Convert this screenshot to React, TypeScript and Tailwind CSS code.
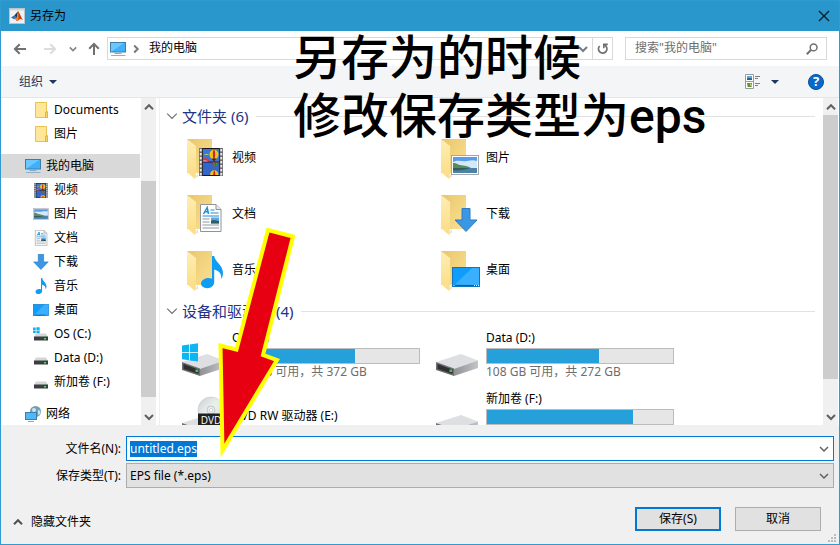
import { useEffect, useRef } from "react";
import type { ReactNode } from "react";

const UI_FONT = "font-['Noto_Sans','Noto_Sans_CJK_SC',sans-serif]";

/* ---------- small glyphs ---------- */

type Dir = "up" | "down" | "right";

function Chevron({ dir, size = 10, width = 1.5, color = "#606060" }: { dir: Dir; size?: number; width?: number; color?: string }) {
  const d = { up: "M1 7.2 5 3.2 9 7.2", down: "M1 3 5 7 9 3", right: "M3.2 1.5 6.7 5 3.2 8.5" }[dir];
  return (
    <svg width={size} height={size} viewBox="0 0 10 10" fill="none" stroke={color} strokeWidth={width} className="shrink-0" aria-hidden="true">
      <path d={d} />
    </svg>
  );
}

function Caret() {
  return (
    <svg width="8" height="4" viewBox="0 0 8 4" fill="#1e395b" aria-hidden="true">
      <path d="M0 0h8L4 4z" />
    </svg>
  );
}

function ArrowGlyph({ rotate = 0, color }: { rotate?: number; color: string }) {
  return (
    <svg width="14" height="14" viewBox="0 0 14 14" fill="none" stroke={color} strokeWidth="2" aria-hidden="true">
      <g transform={`rotate(${rotate} 7 7)`}>
        <path d="M13 7H2M6.7 2.2 1.9 7l4.8 4.8" />
      </g>
    </svg>
  );
}

function MatlabIcon() {
  return (
    <svg width="16" height="16" viewBox="0 0 16 16" aria-hidden="true">
      <rect x=".5" y=".5" width="15" height="15" fill="#f1f1f1" stroke="#b9c4cc" />
      <path d="M1 1h14v1.500H1z" fill="#cfd6dc" />
      <path d="M2 9.500 5.500 7.200 7.200 9 5 11.200z" fill="#2f6fb5" />
      <path d="M5.500 7.200 9 3.200 8 9.500 5 11.600 7 9z" fill="#16365f" />
      <path d="M9.200 3C10.800 5.200 12 9 14 12.200 12 11 11 10.600 9.800 12 8.800 13 7.800 13.300 6.500 11.500 8 10 8.600 6 9.200 3z" fill="#b9421a" />
      <path d="M9.200 3c.4 3 .3 6 .2 9.200-.9.900-1.900.6-2.900-.7C8 10 8.600 6 9.200 3z" fill="#f0862c" />
    </svg>
  );
}

function ComputerIcon() {
  return (
    <svg width="16" height="16" viewBox="0 0 16 16" className="shrink-0" aria-hidden="true">
      <rect x=".5" y="1.500" width="15" height="9.500" fill="#3fb0fb" stroke="#3b7ea8" />
      <path d="M1 11V2h13z" fill="#6cc7ff" />
      <path d="M4.500 12.500h7" stroke="#8fa9bb" />
      <path d="M1 14.500h14.500" stroke="#8fb0c6" />
    </svg>
  );
}

function SmallFolder() {
  return (
    <svg width="16" height="16" viewBox="0 0 16 16" className="shrink-0" aria-hidden="true">
      <path d="M2.500.5h11v9h1v6h-12z" fill="#ffe699" stroke="#e8c250" />
      <path d="M12.500 15.500v-5.500h2v5.500z" fill="#fbd768" stroke="#e0b63c" />
    </svg>
  );
}

/* ---------- shared artwork, drawn in a 24 x 28 box ---------- */

function FilmArt() {
  return (
    <>
      <rect width="24" height="28" fill="#6b6b6b" />
      <g fill="#e6e6e6">
        {[1, 5, 9, 13, 17, 21, 25].map((y) => (
          <g key={y}>
            <rect x=".8" y={y} width="1.900" height="2.400" />
            <rect x="21.300" y={y} width="1.900" height="2.400" />
          </g>
        ))}
      </g>
      <rect x="3.300" width="17.400" height="28" fill="#15181f" />
      <rect x="4" y="1" width="16" height="12.500" fill="#3d76d8" />
      <rect x="4" y="14.500" width="16" height="12.500" fill="#3465cb" />
      <path d="M4 11c2-1.500 4-1 6 .5l1 2H4z" fill="#d8383a" />
      <path d="M4 12.500c2-.8 4-.2 5 1H4z" fill="#e88bb4" />
      <path d="M5 7c2-1.600 4-1 5 0z" fill="#c2d65a" />
      <ellipse cx="15" cy="6.500" rx="4.500" ry="4.800" fill="#f2c414" />
      <ellipse cx="15" cy="6.500" rx="1.100" ry="4.800" fill="#c7281d" />
      <path d="m12.500 10.500 2.500 3 2.500-3z" fill="#3a2c10" />
      <path d="M12.500 14.500h7.500l-3 4h-2z" fill="#c7281d" />
      <path d="M14 14.500h1.500l.5 4h-.8zM17.500 14.500H19l-2 4h-.5z" fill="#35a04a" />
      <path d="M11 27c0-6.500 8.500-6.500 8.500 0z" fill="#f2c414" />
      <path d="M14.300 27c0-6 2-6 2 0z" fill="#c7281d" />
    </>
  );
}

function PictureArt() {
  return (
    <>
      <rect x=".5" y=".5" width="27" height="19" fill="#fff" stroke="#a3a7aa" />
      <rect x="2" y="2" width="24" height="16" fill="#5b9cea" />
      <path d="M2 7c5-3 9 0 14-1 4-1 7-1 10 0v7H2z" fill="#d4e9fa" />
      <path d="M2 8c3-.5 4 1 7 2 4 .8 8 1 11 3H2z" fill="#5c8a5c" />
      <path d="M2 13h24v5H2z" fill="#4b83a8" />
      <path d="M2 13h17c-5 2-10 2.500-17 2.500z" fill="#33605f" />
    </>
  );
}

function DocumentArt() {
  return (
    <>
      <path d="M.5.5h15.500l5 5V27.500H.5z" fill="#fdfdfd" stroke="#8f9498" />
      <path d="M16 .5v5h5" fill="#e6e8ea" stroke="#8f9498" />
      <path d="m3.500 10 3.700-6.500L8.500 10M4.800 7.800h3.500" fill="none" stroke="#1f8fd8" strokeWidth="1.500" />
      <path d="M10.500 6h4M10.500 9h8M2.500 12h16.500" stroke="#1f8fd8" strokeWidth="1.200" />
      <path d="M2.500 15h7M2.500 18h7M2.500 21h16.500M2.500 24h16.500" stroke="#8b9aa5" />
      <rect x="11" y="13.500" width="8" height="6" fill="#5ea6dd" />
      <path d="M11 17c3-2 5 0 8 0v2.500h-8z" fill="#2e5c66" />
    </>
  );
}

function DownArt() {
  return <path d="M8 .5h8v11.500h7L12 23.500 1 12h7z" fill="#3b97e3" stroke="#2a7cc4" />;
}

function MusicArt() {
  return (
    <path
      d="M11 0h2.200C14 6 22 9 22 17c0 2.500-.8 4.500-2 6 1-5.500-2.500-8.500-6.800-9.500V26c0 3.500-3 6.200-7 6.200C2.500 32.200 0 30.300 0 27.600 0 24.500 3.500 22 7.500 22c1.400 0 2.600.3 3.500.8z"
      fill="#0e9cf5"
    />
  );
}

function DesktopArt() {
  return (
    <>
      <rect x=".5" y=".5" width="27" height="19" fill="#0f9dfd" stroke="#1673b5" />
      <path d="M3 17.500 20 1h7v17z" fill="#38b0ff" />
      <path d="M1 18.500h26" stroke="#0b5f9c" />
      <path d="M1.500 18.500h1M22 18.500h1M24 18.500h1M26 18.500h1" stroke="#fff" />
    </>
  );
}

type Art = "video" | "picture" | "document" | "download" | "music" | "desktop";

const ART: Record<Art, { node: ReactNode; small: string; large: string }> = {
  video: { node: <FilmArt />, small: "translate(1 1) scale(.58 .54)", large: "translate(17 15)" },
  picture: { node: <PictureArt />, small: "translate(0 2) scale(.57 .6)", large: "translate(15 22)" },
  document: { node: <DocumentArt />, small: "translate(2 0) scale(.57 .57)", large: "translate(18 15)" },
  download: { node: <DownArt />, small: "translate(0 0) scale(.66 .66)", large: "translate(18 19)" },
  music: { node: <MusicArt />, small: "translate(2.500 0) scale(.5 .5)", large: "translate(19 11)" },
  desktop: { node: <DesktopArt />, small: "translate(0 2) scale(.57 .6)", large: "translate(16 22)" },
};

function SmallArt({ art }: { art: Art }) {
  return (
    <svg width="16" height="16" viewBox="0 0 16 16" className="shrink-0" aria-hidden="true">
      <g transform={ART[art].small}>{ART[art].node}</g>
    </svg>
  );
}

function BigFolder({ art }: { art: Art }) {
  return (
    <svg width="48" height="48" viewBox="0 0 48 48" className="shrink-0" aria-hidden="true">
      <defs>
        <linearGradient id="folderBack" x1="0" x2="1" y1="0" y2="1">
          <stop offset="0" stopColor="#e9c66c" />
          <stop offset="1" stopColor="#fbe192" />
        </linearGradient>
        <linearGradient id="folderFront" x1="0" x2="0" y1="0" y2="1">
          <stop offset="0" stopColor="#ffeeb4" />
          <stop offset="1" stopColor="#fbdc82" />
        </linearGradient>
      </defs>
      <path d="m12 45 4-5v4z" fill="#e4e4e4" />
      <path d="M5 6h25v34H5z" fill="url(#folderBack)" />
      <path d="m5 6 9 7v27l-1 6-8-7z" fill="url(#folderFront)" />
      <g transform={ART[art].large}>{ART[art].node}</g>
    </svg>
  );
}

function SmallDrive({ os = false }: { os?: boolean }) {
  return (
    <svg width="16" height="16" viewBox="0 0 16 16" className="shrink-0" aria-hidden="true">
      <path d="M3 7.500h10l2 3.500H1z" fill="#d4d6da" />
      <path d="M1 10.500h14v4H1z" fill="#3b3d40" />
      <rect x="11" y="12" width="2" height="1.500" fill="#3fe05a" />
      {os && <path d="M0 1.500h2.700v2.400H0zM3.400 1.300h3.300v2.600H3.400zM0 4.600h2.700V7H0zM3.400 4.600h3.300v2.700H3.400z" fill="#12b4f0" />}
    </svg>
  );
}

function NetworkIcon() {
  return (
    <svg width="16" height="16" viewBox="0 0 16 16" className="shrink-0" aria-hidden="true">
      <circle cx="10.500" cy="5.500" r="5.500" fill="#6f9fb9" />
      <path d="M7 3c2-2 4-1 4 1s-3 2-3 4zM13 4c2 0 3 2 2 4l-2 1z" fill="#cfe3ee" />
      <rect x=".5" y="6.500" width="11" height="7" fill="#4fb8fb" stroke="#3b7ea8" />
      <path d="M3 15.500h6" stroke="#8fa9bb" />
    </svg>
  );
}

type DriveKind = "os" | "disk" | "dvd";

function BigDrive({ kind }: { kind: DriveKind }) {
  return (
    <svg width="48" height="48" viewBox="0 0 48 48" className="shrink-0" aria-hidden="true">
      <defs>
        <linearGradient id="driveSide" x1="0" x2="1" y1="0" y2="0">
          <stop offset="0" stopColor="#8f9195" />
          <stop offset="1" stopColor="#c3c4c7" />
        </linearGradient>
        <linearGradient id="disc" x1="0" x2="1" y1="0" y2="1">
          <stop offset="0" stopColor="#c9cdd0" />
          <stop offset=".5" stopColor="#eef3f1" />
          <stop offset="1" stopColor="#c3cfd4" />
        </linearGradient>
      </defs>
      <path d="m0 31 25-8 17 6.500-24 9z" fill="#dedfe3" />
      <path d="m18 38 24-8.500V37l-24 8z" fill="url(#driveSide)" />
      <path d="m0 31 18 6.500V45L0 39z" fill="#6d6f72" />
      <path d="m1.500 33 15 5.500V43l-15-5z" fill="#2e3032" />
      <rect x="13.500" y="38.500" width="2.500" height="2.500" fill="#35d04d" />
      {kind === "os" && <path d="M0 14.500 7 13.500V21H0zM7.800 13.400 16 12.300V21H7.800zM0 21.800h7v7.500l-7-1zM7.800 21.800H16v8.700l-8.200-1.100z" fill="#0cb6f2" />}
      {kind === "dvd" && (
        <>
          <circle cx="29" cy="18" r="13" fill="url(#disc)" stroke="#c2c6c8" strokeWidth=".6" />
          <path d="m29 18 7-11 4 4z" fill="#e2f3df" />
          <circle cx="29" cy="18" r="4" fill="#e9ebec" stroke="#b3b7ba" strokeWidth=".7" />
          <circle cx="29" cy="18" r="1.600" fill="#fff" stroke="#b3b7ba" strokeWidth=".5" />
          <rect x="16" y="21.500" width="26" height="13" fill="#1f2021" />
          <text x="29" y="31.500" textAnchor="middle" fontSize="10" fill="#fff" fontFamily="Open Sans">DVD</text>
        </>
      )}
    </svg>
  );
}

/* ---------- window parts ---------- */

function ScrollBar({ className, before, after }: { className: string; before: string; after: string }) {
  return (
    <div className={`flex w-[15px] shrink-0 flex-col bg-[#f0f0f0] ${className}`} aria-hidden="true">
      <div className="flex h-[17px] items-center justify-center"><Chevron dir="up" width={2} /></div>
      <div className={before} />
      <div className="flex-1 bg-[#cdcdcd]" />
      <div className={after} />
      <div className="flex h-[17px] items-center justify-center"><Chevron dir="down" width={2} /></div>
    </div>
  );
}

function TreeItem({ icon, label, root = false, active = false }: { icon: ReactNode; label: string; root?: boolean; active?: boolean }) {
  return (
    <li>
      <button type="button" className={`flex h-6 w-full items-center gap-[5px] text-left whitespace-nowrap ${root ? "pl-6" : "pl-8"} ${active ? "bg-[#d9d9d9]" : ""}`}>
        {icon}
        {label}
      </button>
    </li>
  );
}

function Sidebar() {
  return (
    <nav className="flex w-[159px] shrink-0 overflow-hidden border-r border-[#f0f0f0]">
      <div className="flex flex-1 flex-col gap-2">
        <ul>
          <TreeItem icon={<SmallFolder />} label="Documents" />
          <TreeItem icon={<SmallFolder />} label="图片" />
        </ul>
        <ul>
          <TreeItem root active icon={<ComputerIcon />} label="我的电脑" />
          <TreeItem icon={<SmallArt art="video" />} label="视频" />
          <TreeItem icon={<SmallArt art="picture" />} label="图片" />
          <TreeItem icon={<SmallArt art="document" />} label="文档" />
          <TreeItem icon={<SmallArt art="download" />} label="下载" />
          <TreeItem icon={<SmallArt art="music" />} label="音乐" />
          <TreeItem icon={<SmallArt art="desktop" />} label="桌面" />
          <TreeItem icon={<SmallDrive os />} label="OS (C:)" />
          <TreeItem icon={<SmallDrive />} label="Data (D:)" />
          <TreeItem icon={<SmallDrive />} label="新加卷 (F:)" />
        </ul>
        <ul>
          <TreeItem root icon={<NetworkIcon />} label="网络" />
        </ul>
      </div>
      <ScrollBar className="mr-[3px] ml-px" before="h-[66px]" after="h-[11px]" />
    </nav>
  );
}

function GroupHeader({ title }: { title: string }) {
  return (
    <h2 className="flex h-6 items-center gap-2">
      <button type="button" className="flex items-center gap-1 text-[15px] leading-6 whitespace-nowrap text-[#1e3287]">
        <Chevron dir="down" size={12} width={1} color="#707070" />
        {title}
      </button>
      <span className="h-px flex-1 bg-[#e2e2e2]" />
    </h2>
  );
}

const FOLDERS: { art: Art; label: string }[] = [
  { art: "video", label: "视频" },
  { art: "picture", label: "图片" },
  { art: "document", label: "文档" },
  { art: "download", label: "下载" },
  { art: "music", label: "音乐" },
  { art: "desktop", label: "桌面" },
];

const DRIVES: { kind: DriveKind; label: string; used?: number; note?: string }[] = [
  { kind: "os", label: "OS (C:)", used: 65.6, note: "128 GB 可用，共 372 GB" },
  { kind: "disk", label: "Data (D:)", used: 60, note: "108 GB 可用，共 272 GB" },
  { kind: "dvd", label: "DVD RW 驱动器 (E:)" },
  { kind: "disk", label: "新加卷 (F:)", used: 78.4 },
];

function Content() {
  return (
    <main className="min-w-0 flex-1 overflow-hidden pt-[6px] pr-2 pl-[6px]">
      <GroupHeader title="文件夹 (6)" />
      <ul className="mt-px grid grid-cols-[repeat(auto-fill,254px)] pl-4">
        {FOLDERS.map((f) => (
          <li key={f.label} className="flex h-14 items-center gap-[2px]">
            <BigFolder art={f.art} />
            <span className="pt-px">{f.label}</span>
          </li>
        ))}
      </ul>
      <div className="mt-[2px]">
        <GroupHeader title="设备和驱动器 (4)" />
      </div>
      <ul className="mt-px grid grid-cols-[repeat(auto-fill,254px)] pl-4">
        {DRIVES.map((d) => (
          <li key={d.label} className="flex h-[61px] items-center gap-[2px]">
            <BigDrive kind={d.kind} />
            <div className="w-[188px] leading-4 whitespace-nowrap">
              <p>{d.label}</p>
              {d.used !== undefined && (
                <>
                  <div className="mt-[2px] h-4 border border-[#bcbcbc] bg-[#e6e6e6]">
                    <div className="h-full bg-[#26a0da]" style={{ width: `${d.used}%` }} />
                  </div>
                  <p className="min-h-4 text-[#6d6d6d]">{d.note}</p>
                </>
              )}
            </div>
          </li>
        ))}
      </ul>
    </main>
  );
}

function NavBar() {
  return (
    <div className="flex h-[35px] shrink-0 items-center bg-white pr-3 pl-3">
      <button type="button" aria-label="后退"><ArrowGlyph color="#707070" /></button>
      <button type="button" aria-label="前进" className="ml-4"><ArrowGlyph rotate={180} color="#dcdcdc" /></button>
      <button type="button" aria-label="最近" className="ml-3"><Chevron dir="down" size={8} width={2} color="#858585" /></button>
      <button type="button" aria-label="向上" className="ml-[10px]"><ArrowGlyph rotate={90} color="#707070" /></button>
      <div className="ml-[6px] flex h-[23px] min-w-0 flex-1 items-center border border-[#d9d9d9] pl-[2px]">
        <ComputerIcon />
        <span className="ml-[5px]"><Chevron dir="right" width={2} color="#7a7a7a" /></span>
        <button type="button" className="ml-2 pb-[2px]">我的电脑</button>
        <button type="button" aria-label="以前的位置" className="mr-1 ml-auto"><Chevron dir="down" width={2} color="#7a7a7a" /></button>
        <button type="button" aria-label="刷新" className="flex h-full w-5 items-center justify-center border-l border-[#d9d9d9]">
          <svg width="12" height="12" viewBox="0 0 12 12" fill="none" stroke="#707070" strokeWidth="1.800" aria-hidden="true">
            <path d="M2.600 3A4.200 4.200 0 1 0 9 3.200L7.500 2" />
            <path d="M6.800 5.300V1.400h4" strokeWidth="1.600" />
          </svg>
        </button>
      </div>
      <div className="ml-3 flex h-[23px] w-[202px] items-center border border-[#d9d9d9] pr-2 pl-[9px]">
        <input type="search" aria-label="搜索" placeholder={'搜索"我的电脑"'} className="min-w-0 flex-1 bg-transparent pb-[2px] outline-none placeholder:text-[#6d6d6d]" />
        <svg width="12" height="12" viewBox="0 0 12 12" fill="none" stroke="#707070" aria-hidden="true">
          <circle cx="7.600" cy="4.400" r="3.400" strokeWidth="1.500" />
          <path d="M5.200 6.800.8 11.200" strokeWidth="2" />
        </svg>
      </div>
    </div>
  );
}

function ToolBar() {
  return (
    <div className="flex h-8 shrink-0 items-center border-b border-[#e5e6e7] bg-[#f4f5f7] pr-[15px] pl-[18px]">
      <button type="button" className="flex items-center gap-[6px] text-[#1e395b]">
        组织
        <Caret />
      </button>
      <button type="button" aria-label="更改视图" className="ml-auto flex items-center gap-[11px]">
        <svg width="15" height="15" viewBox="0 0 15 15" fill="none" aria-hidden="true">
          <path d="M.5.5h8v14h-8zM.5 7.500h8" fill="#fff" stroke="#9a9a9a" />
          <path d="M2 2h5v4H2z" fill="#5aa7e8" />
          <path d="M2 4.500c2-1 3 0 5 0V6H2z" fill="#2c5f7a" />
          <path d="M2 9h5v4H2z" fill="#e6d14c" />
          <path d="M2 9h3v2l2 2H3z" fill="#4f9a45" />
          <path d="M5 9h2v2z" fill="#d2573d" />
          <path d="M10 2.500h5M10 4.500h3M10 9.500h5M10 11.500h3" stroke="#7d7d7d" />
        </svg>
        <Caret />
      </button>
      <button type="button" aria-label="帮助" className="ml-[29px] flex size-4 items-center justify-center rounded-full border border-[#0a4d94] bg-[#0a6acb] text-[13px] leading-none font-bold text-white">
        ?
      </button>
    </div>
  );
}

function SaveForm() {
  const nameRef = useRef<HTMLInputElement>(null);
  useEffect(() => {
    nameRef.current?.focus();
    nameRef.current?.select();
  }, []);
  return (
    <form className="relative shrink-0 bg-[#f0f0f0] pt-[11px] pr-[5px] pb-[13px]" onSubmit={(e) => e.preventDefault()}>
      <div className="grid grid-cols-[120px_1fr] items-center gap-x-[5px] gap-y-[2px]">
        <label htmlFor="file-name" className="text-right">文件名(N):</label>
        <div className="flex h-[25px] items-center border border-[#0078d7] bg-white pr-1 pl-[3px]">
          <input id="file-name" ref={nameRef} defaultValue="untitled.eps" className="min-w-0 flex-1 outline-none selection:bg-[#0078d7] selection:text-white" />
          <Chevron dir="down" />
        </div>
        <label htmlFor="file-type" className="text-right">保存类型(T):</label>
        <div className="relative">
          <select id="file-type" className="block h-[25px] w-full appearance-none border border-[#acacac] bg-[#e1e1e1] pl-[3px] outline-none">
            <option>EPS file (*.eps)</option>
          </select>
          <span className="pointer-events-none absolute inset-y-0 right-[5px] flex items-center"><Chevron dir="down" /></span>
        </div>
      </div>
      <div className="mt-[19px] flex items-center pr-[13px] pl-3">
        <button type="button" className="flex items-center gap-2 pt-[6px]">
          <Chevron dir="up" width={2} color="#505050" />
          隐藏文件夹
        </button>
        <button type="submit" className="ml-auto h-6 w-[86px] border-2 border-[#0078d7] bg-[#e1e1e1]">保存(S)</button>
        <button type="button" className="ml-[14px] h-6 w-[86px] border border-[#adadad] bg-[#e1e1e1]">取消</button>
      </div>
      <svg width="8" height="8" viewBox="0 0 8 8" fill="#bcbcbc" className="absolute right-[3px] bottom-[2px]" aria-hidden="true">
        <path d="M6 0h2v2H6zM3 3h2v2H3zM6 3h2v2H6zM0 6h2v2H0zM3 6h2v2H3zM6 6h2v2H6z" />
      </svg>
    </form>
  );
}

function Annotations() {
  return (
    <>
      <svg width="70" height="240" viewBox="215 222 70 240" className="pointer-events-none absolute top-[221px] left-[214px] overflow-visible" aria-hidden="true">
        <path d="M268 230 293 236.500 263 355 277 360 222.500 450.500 220.500 345.500 236.500 349.500z" fill="#e60012" stroke="#ffff00" strokeWidth="4" strokeMiterlimit="20" />
      </svg>
      <p className="pointer-events-none absolute top-[29px] left-[292px] font-['Roboto','Noto_Sans_CJK_SC',sans-serif] text-[48px] leading-[58px] font-medium whitespace-nowrap text-black">
        另存为的时候
        <br />
        修改保存类型为eps
      </p>
    </>
  );
}

export default function App() {
  return (
    <div className={`relative flex h-screen flex-col overflow-hidden border border-[#2f9bd0] text-[12px] leading-4 text-black ${UI_FONT}`}>
      <header className="flex h-[30px] shrink-0 items-center bg-[#2996cc] pr-[9px] pl-2">
        <MatlabIcon />
        <h1 className="ml-[5px]">另存为</h1>
        <button type="button" aria-label="关闭" className="ml-auto">
          <svg width="12" height="12" viewBox="0 0 12 12" stroke="#0b1a24" strokeWidth="1.200" aria-hidden="true">
            <path d="m1 1 10 10M11 1 1 11" />
          </svg>
        </button>
      </header>
      <NavBar />
      <ToolBar />
      <div className="flex min-h-0 flex-1 bg-white">
        <Sidebar />
        <Content />
        <ScrollBar className="mr-px" before="h-0" after="h-[29px]" />
      </div>
      <SaveForm />
      <Annotations />
    </div>
  );
}
